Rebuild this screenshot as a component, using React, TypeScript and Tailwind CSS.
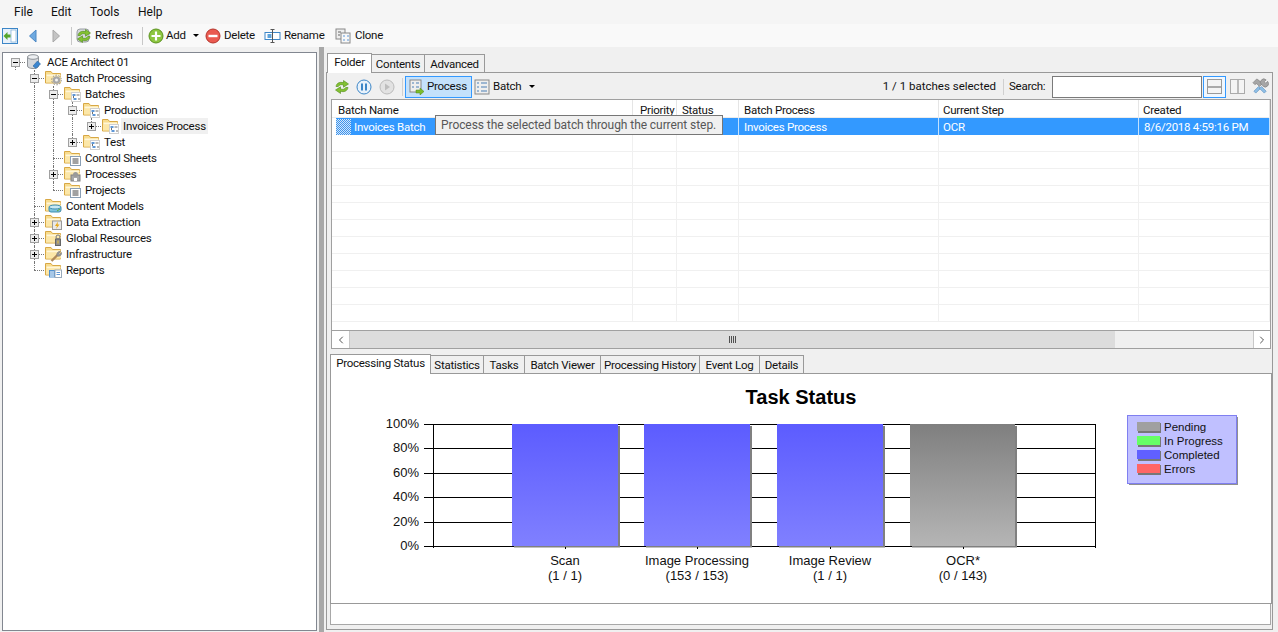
import React from 'react';
import { ChevronLeft, ChevronRight } from 'lucide-react';

type Overlay = 'gear' | 'flow' | 'lines' | 'machine' | 'db' | 'bolt' | 'lock' | 'wrench' | 'report';

const FolderIcon: React.FC<{ overlay: Overlay }> = ({ overlay }) => (
  <svg width="17" height="16" viewBox="0 0 17 16" className="shrink-0">
    <path d="M0.500 13V1.500h5.500l1.500 2h8v9.500z" fill="#f8dc8e" stroke="#d8a845" />
    <path d="M1.500 5.500h14" stroke="#fff6d8" strokeWidth="2" />
    <rect x="1" y="7" width="15" height="5.500" fill="#fce7a8" />
    {overlay === 'gear' && (
      <g>
        <circle cx="11.500" cy="10" r="3.800" fill="#a8a8a8" />
        <circle cx="11.500" cy="10" r="4.800" fill="none" stroke="#8a8a8a" strokeDasharray="1.5 1.5" />
        <circle cx="11.500" cy="10" r="1.500" fill="#f4f4f4" />
      </g>
    )}
    {overlay === 'flow' && (
      <g>
        <rect x="7.500" y="6.500" width="9" height="9" fill="#fff" stroke="#d0d0d0" />
        <rect x="8.500" y="8" width="3" height="2" fill="#5f97d6" />
        <rect x="9.500" y="12" width="3" height="2" fill="#5f97d6" />
        <path d="M12.500 9h3M14 13h2M9.500 10v2" stroke="#707070" />
      </g>
    )}
    {overlay === 'lines' && (
      <g>
        <rect x="6.500" y="6.500" width="10" height="9" fill="#fff" stroke="#8a9fb5" />
        <path d="M8.500 9h6M8.500 11h6M8.500 13h6" stroke="#444" />
      </g>
    )}
    {overlay === 'machine' && (
      <g>
        <rect x="7" y="9" width="9" height="6" fill="#a9a9a9" stroke="#808080" />
        <circle cx="11.500" cy="8.500" r="2.500" fill="#9a9a9a" />
        <rect x="10" y="12" width="3" height="3" fill="#fff" />
      </g>
    )}
    {overlay === 'db' && (
      <g>
        <rect x="4" y="8" width="12" height="6" rx="2" fill="#7fc3de" stroke="#3f8fb0" />
        <ellipse cx="10" cy="9" rx="6" ry="2" fill="#c7e8f4" stroke="#3f8fb0" />
        <path d="M12 13l3-2" stroke="#58a83a" />
      </g>
    )}
    {overlay === 'bolt' && (
      <g>
        <rect x="7.500" y="7" width="9" height="8.500" fill="#e8e8e8" stroke="#9a9a9a" />
        <path d="M13 7.500L10 12h2l-1 3 3.500-4.500h-2z" fill="#e8a817" />
      </g>
    )}
    {overlay === 'lock' && (
      <g>
        <rect x="10.500" y="9" width="5" height="6.500" fill="#8f8f8f" stroke="#666" />
        <circle cx="13" cy="7" r="2" fill="none" stroke="#777" />
        <rect x="12.500" y="10.500" width="1" height="3" fill="#f1c232" />
      </g>
    )}
    {overlay === 'wrench' && (
      <g>
        <path d="M6.500 15l6-6" stroke="#b08a5a" strokeWidth="2.400" />
        <path d="M12 9.500a3 3 0 0 1 3.500-4l-1.700 1.700 1 1 1.700-1.700a3 3 0 0 1-4 3.500z" fill="#9a9a9a" stroke="#777" strokeWidth="0.600" />
      </g>
    )}
    {overlay === 'report' && (
      <g>
        <rect x="4" y="8" width="6" height="7.500" fill="#4f90d0" />
        <path d="M5 10h4M5 12h4M5 14h4" stroke="#fff" />
        <rect x="10" y="8" width="6.500" height="7.500" fill="#fff" stroke="#9ab" />
        <path d="M11.500 10.500h3.500M11.500 12.500h3.500" stroke="#5f97d6" />
      </g>
    )}
  </svg>
);

const DbIcon = () => (
  <svg width="17" height="16" viewBox="0 0 17 16" className="shrink-0">
    <path d="M1.500 3v9c0 1.500 2.500 2.500 5.500 2.500s5.500-1 5.500-2.500V3z" fill="#d5d8dc" stroke="#8f9499" />
    <ellipse cx="7" cy="3" rx="5.500" ry="2.300" fill="#eef0f2" stroke="#8f9499" />
    <path d="M7 12l4.500-5 3 3-4.500 4.500z" fill="#3c86cf" stroke="#2a659f" strokeWidth="0.600" />
  </svg>
);

const TreeCell: React.FC<{ line?: 'full' | 'elbow' | 'tee' | 'start' | 'none'; exp?: '+' | '-' }> = ({ line = 'none', exp }) => (
  <div className="relative w-[19px] h-4 shrink-0">
    {(line === 'full' || line === 'tee') && <div className="absolute left-[9px] top-0 bottom-0 border-l border-dotted border-[#777]" />}
    {line === 'elbow' && <div className="absolute left-[9px] top-0 h-2 border-l border-dotted border-[#777]" />}
    {line === 'start' && <div className="absolute left-[9px] top-2 bottom-0 border-l border-dotted border-[#777]" />}
    {(line === 'tee' || line === 'elbow' || line === 'start') && (
      <div className="absolute left-[9px] right-0 top-2 border-t border-dotted border-[#777]" />
    )}
    {exp && (
      <div className="absolute left-[5px] top-[4px] w-[9px] h-[9px] border border-[#a0a0a0] bg-[#ececec] flex items-center justify-center">
        <div className="relative w-[5px] h-[5px]">
          <div className="absolute left-0 right-0 top-[2px] h-px bg-black" />
          {exp === '+' && <div className="absolute top-0 bottom-0 left-[2px] w-px bg-black" />}
        </div>
      </div>
    )}
  </div>
);

type TreeRowData = {
  label: string;
  guides: ('none' | 'full')[];
  line: 'elbow' | 'tee' | 'start';
  exp?: '+' | '-';
  overlay?: Overlay;
  selected?: boolean;
};

const treeRows: TreeRowData[] = [
  { label: 'ACE Architect 01', guides: [], line: 'start', exp: '-' },
  { label: 'Batch Processing', guides: ['none'], line: 'tee', exp: '-', overlay: 'gear' },
  { label: 'Batches', guides: ['none', 'full'], line: 'tee', exp: '-', overlay: 'flow' },
  { label: 'Production', guides: ['none', 'full', 'full'], line: 'tee', exp: '-', overlay: 'flow' },
  { label: 'Invoices Process', guides: ['none', 'full', 'full', 'full'], line: 'elbow', exp: '+', overlay: 'flow', selected: true },
  { label: 'Test', guides: ['none', 'full', 'full'], line: 'elbow', exp: '+', overlay: 'flow' },
  { label: 'Control Sheets', guides: ['none', 'full'], line: 'tee', overlay: 'lines' },
  { label: 'Processes', guides: ['none', 'full'], line: 'tee', exp: '+', overlay: 'machine' },
  { label: 'Projects', guides: ['none', 'full'], line: 'elbow', overlay: 'lines' },
  { label: 'Content Models', guides: ['none'], line: 'tee', overlay: 'db' },
  { label: 'Data Extraction', guides: ['none'], line: 'tee', exp: '+', overlay: 'bolt' },
  { label: 'Global Resources', guides: ['none'], line: 'tee', exp: '+', overlay: 'lock' },
  { label: 'Infrastructure', guides: ['none'], line: 'tee', exp: '+', overlay: 'wrench' },
  { label: 'Reports', guides: ['none'], line: 'elbow', overlay: 'report' },
];

const Caret = () => <span className="w-0 h-0 border-x-[3px] border-x-transparent border-t-[3px] border-t-black" />;

const arrowPaths = (
  <>
    <path d="M2 7.500C2.500 4 6 2.500 9.500 3.800V1.500l5 3.500-5 3.200V6C7 5.200 5 5.800 4.300 7.500z" fill="#84c232" stroke="#4d8a17" strokeWidth="0.600" />
    <path d="M14 8.500C13.500 12 10 13.500 6.500 12.200v2.300l-5-3.500 5-3.200V10c2.500.8 4.500.2 5.200-1.500z" fill="#84c232" stroke="#4d8a17" strokeWidth="0.600" />
  </>
);

const RefreshArrows = () => (
  <svg width="16" height="16" viewBox="0 0 16 16" className="shrink-0">
    {arrowPaths}
  </svg>
);

const TopToolbar = () => (
  <div className="h-[23px] bg-[#f9f9f9] flex items-center pl-[2px] shrink-0">
    <svg width="16" height="16" viewBox="0 0 16 16" className="shrink-0">
      <rect x="0.500" y="0.500" width="15" height="15" fill="#e8f1fa" stroke="#3c86c7" />
      <rect x="9" y="2" width="5" height="12" fill="#fff" stroke="#6aa0d0" strokeWidth="0.600" />
      <path d="M1.500 8l4-4v2.500h3v3h-3V12z" fill="#55a52a" />
    </svg>
    <svg width="10" height="14" viewBox="0 0 10 14" className="ml-[10px] shrink-0">
      <path d="M8 1L1.500 7 8 13z" fill="#6ea9e0" stroke="#4d88c4" />
    </svg>
    <svg width="10" height="14" viewBox="0 0 10 14" className="ml-[13px] shrink-0">
      <path d="M2 1l6.500 6L2 13z" fill="#c4c4c4" stroke="#a8a8a8" />
    </svg>
    <div className="w-px h-[18px] bg-[#c8c8c8] ml-[10px]" />
    <svg width="16" height="16" viewBox="0 0 16 16" className="ml-[4px] shrink-0">
      <rect x="1" y="1" width="12" height="13" rx="3" fill="#d5d8dc" stroke="#9a9fa4" />
      {arrowPaths}
    </svg>
    <span className="ml-[3px] w-[39px] whitespace-nowrap">Refresh</span>
    <div className="w-px h-[18px] bg-[#c8c8c8] ml-[8px]" />
    <svg width="16" height="16" viewBox="0 0 16 16" className="ml-[5px] shrink-0">
      <circle cx="8" cy="8" r="7" fill="#8dc63f" stroke="#5b921f" />
      <path d="M8 3.500v9M3.500 8h9" stroke="#fff" strokeWidth="2.200" />
    </svg>
    <span className="ml-[2px] w-[22px] whitespace-nowrap">Add</span>
    <span className="ml-[5px] flex"><Caret /></span>
    <svg width="16" height="16" viewBox="0 0 16 16" className="ml-[6px] shrink-0">
      <circle cx="8" cy="8" r="7" fill="#ea5a50" stroke="#b5342b" />
      <path d="M3.500 8h9" stroke="#fff" strokeWidth="2.400" />
    </svg>
    <span className="ml-[3px] w-[33px] whitespace-nowrap">Delete</span>
    <svg width="17" height="16" viewBox="0 0 16 16" className="ml-[7px] shrink-0">
      <rect x="0.500" y="4.500" width="15" height="7" fill="#fff" stroke="#3c86c7" />
      <rect x="3" y="6" width="4" height="4" fill="#5ea3db" />
      <path d="M8 1.500v13M6 1.500h4M6 14.500h4" stroke="#555" />
    </svg>
    <span className="ml-[3px] w-[43px] whitespace-nowrap">Rename</span>
    <svg width="16" height="16" viewBox="0 0 16 16" className="ml-[8px] shrink-0">
      <rect x="1" y="1" width="9" height="10" fill="#eee" stroke="#888" />
      <rect x="6" y="5" width="9" height="10" fill="#f7f7f7" stroke="#888" />
      <path d="M8 8h2M12 8h2M8 12h2M12 12h2" stroke="#5f97d6" />
      <path d="M3 4h3M3 7h2" stroke="#666" />
    </svg>
    <span className="ml-[4px]">Clone</span>
  </div>
);

const columns = [
  { name: 'Batch Name', w: 'w-[301px]', head: 'pl-[6px]', body: '', cell: 'Invoices Batch' },
  { name: 'Priority', w: 'w-[44px]', head: 'pl-[7px]', body: '', cell: '' },
  { name: 'Status', w: 'w-[62px]', head: 'pl-[5px]', body: '', cell: '' },
  { name: 'Batch Process', w: 'w-[200px]', head: 'pl-[5px]', body: 'pl-[5px]', cell: 'Invoices Process' },
  { name: 'Current Step', w: 'w-[200px]', head: 'pl-[4px]', body: 'pl-[4px]', cell: 'OCR' },
  { name: 'Created', w: 'w-[131px]', head: 'pl-[4px]', body: 'pl-[5px]', cell: '8/6/2018 4:59:16 PM' },
];

const BatchList = () => (
  <div className="relative h-[250px] ml-[4px] w-[940px] border border-[#a0a0a0] bg-white flex flex-col overflow-hidden shrink-0">
    <div className="flex h-[18px] shrink-0 border-b border-[#ececec]">
      {columns.map((c) => (
        <div key={c.name} className={`${c.w} ${c.head} shrink-0 pt-[3px] leading-[14px] border-r border-[#e5e5e5] overflow-hidden whitespace-nowrap`}>
          {c.name}
        </div>
      ))}
    </div>
    <div className="flex h-[17px] shrink-0">
      <div className="w-[4px] shrink-0" />
      {columns.map((c, i) => (
        <div key={c.name} className={`${i === 0 ? 'w-[297px] gap-[3px]' : c.w} ${c.body} shrink-0 bg-[#3399ff] text-white leading-[17px] border-r border-white/70 flex items-center whitespace-nowrap overflow-hidden`}>
          {i === 0 && (
            <svg width="15" height="16" viewBox="0 0 15 16" className="shrink-0" shapeRendering="crispEdges">
              <defs>
                <pattern id="dither" width="2" height="2" patternUnits="userSpaceOnUse">
                  <rect width="2" height="2" fill="#3f93ea" />
                  <rect width="1" height="1" fill="#cfe6fd" />
                  <rect x="1" y="1" width="1" height="1" fill="#cfe6fd" />
                </pattern>
              </defs>
              <rect width="15" height="16" fill="url(#dither)" />
            </svg>
          )}
          <span className="pt-px">{c.cell}</span>
        </div>
      ))}
    </div>
    <div className="flex-1 flex flex-col">
      {Array.from({ length: 11 }).map((_, r) => (
        <div key={r} className="flex h-[17px] shrink-0 border-b border-[#f0f0f0]">
          {columns.map((c) => (
            <div key={c.name} className={`${c.w} shrink-0 border-r border-[#f0f0f0]`} />
          ))}
        </div>
      ))}
    </div>
    <div className="absolute left-0 right-0 bottom-0 h-[18px] flex bg-[#f0f0f0] border-t border-[#a0a0a0]">
      <div className="w-[18px] bg-white border-r border-[#c8c8c8] flex items-center justify-center">
        <ChevronLeft className="w-3 h-3 text-[#555]" />
      </div>
      <div className="w-[765px] bg-[#dcdcdc] flex items-center justify-center">
        <span className="flex gap-px">
          <span className="w-px h-[7px] bg-[#505050]" />
          <span className="w-px h-[7px] bg-[#505050]" />
          <span className="w-px h-[7px] bg-[#505050]" />
          <span className="w-px h-[7px] bg-[#505050]" />
        </span>
      </div>
      <div className="flex-1" />
      <div className="w-[17px] bg-white border-l border-[#c8c8c8] flex items-center justify-center">
        <ChevronRight className="w-3 h-3 text-[#555]" />
      </div>
    </div>
  </div>
);

const Tab: React.FC<{ label: string; w: string; active?: boolean }> = ({ label, w, active }) =>
  active ? (
    <div className={`${w} h-5 -mb-px relative z-10 bg-white border border-b-0 border-[#999] shrink-0 text-center leading-[17px] whitespace-nowrap`}>{label}</div>
  ) : (
    <div className={`${w} h-[18px] bg-[#f0f0f0] border border-b-0 border-l-0 border-[#999] shrink-0 text-center leading-[19px] whitespace-nowrap`}>{label}</div>
  );

const bars = [
  { x: 512, w: 107, label: 'Scan', count: '(1 / 1)', id: 'barBlue' },
  { x: 644, w: 107, label: 'Image Processing', count: '(153 / 153)', id: 'barBlue' },
  { x: 777, w: 107, label: 'Image Review', count: '(1 / 1)', id: 'barBlue' },
  { x: 910, w: 106, label: 'OCR*', count: '(0 / 143)', id: 'barGray' },
];

const TaskChart = () => (
  <svg width="940" height="229" viewBox="331 374 940 229" className="block" style={{ fontFamily: '"Liberation Sans", sans-serif', letterSpacing: 0 }}>
    <defs>
      <linearGradient id="barBlue" x1="0" x2="0" y1="0" y2="1">
        <stop offset="0" stopColor="#5c5cff" />
        <stop offset="1" stopColor="#8080ff" />
      </linearGradient>
      <linearGradient id="barGray" x1="0" x2="0" y1="0" y2="1">
        <stop offset="0" stopColor="#7f7f7f" />
        <stop offset="1" stopColor="#b5b5b5" />
      </linearGradient>
    </defs>
    <text x="801" y="404" textAnchor="middle" fontSize="20" fontWeight="700" fill="#000">Task Status</text>
    {[100, 80, 60, 40, 20, 0].map((p, i) => {
      const y = 424 + i * 24.4;
      return (
        <g key={p}>
          <path d={`M424 ${Math.round(y) + 0.5}H1095`} stroke="#000" />
          <text x="419" y={Math.round(y) + 4} textAnchor="end" fontSize="13" fill="#111">{p}%</text>
        </g>
      );
    })}
    <path d="M433.500 424V548M1095.500 424V548" stroke="#000" />
    {bars.map((b) => (
      <g key={b.label}>
        <rect x={b.x + 2} y="426" width={b.w - 1} height="121.500" fill="#808080" />
        <rect x={b.x} y="424" width={b.w - 1} height="122" fill={`url(#${b.id})`} />
        <path d={`M${b.x + 53.5} 547V549`} stroke="#000" />
        <text x={b.x + 53} y="565" textAnchor="middle" fontSize="13" fill="#111">{b.label}</text>
        <text x={b.x + 53} y="580" textAnchor="middle" fontSize="13" fill="#111">{b.count}</text>
      </g>
    ))}
    <rect x="1129" y="417" width="109" height="68" fill="#909090" />
    <rect x="1127.500" y="415.500" width="109" height="68" fill="#c0c0ff" stroke="#7f7ff0" />
    {[
      { label: 'Pending', fill: '#a0a0a0' },
      { label: 'In Progress', fill: '#66ff66' },
      { label: 'Completed', fill: '#6060ff' },
      { label: 'Errors', fill: '#ff6666' },
    ].map((l, i) => (
      <g key={l.label}>
        <rect x="1138" y={423 + i * 14} width="23" height="10" fill="#777" />
        <rect x="1137" y={422 + i * 14} width="23" height="9" fill={l.fill} />
        <text x="1164" y={431 + i * 14} fontSize="11.500" fill="#111">{l.label}</text>
      </g>
    ))}
  </svg>
);

export default function App() {
  return (
    <div
      className="w-[1278px] h-[632px] overflow-hidden bg-[#f0f0f0] flex flex-col text-[11.5px] tracking-[-0.25px] text-[#111]"
      style={{ fontFamily: 'Roboto, "Liberation Sans", Arial, sans-serif' }}
    >
      <div className="h-6 shrink-0 bg-[#f5f5f5] flex items-center pl-[14px] gap-[19px] text-[12px] tracking-normal">
        <span className="w-[18px]">File</span>
        <span className="w-[20px]">Edit</span>
        <span className="w-[29px]">Tools</span>
        <span>Help</span>
      </div>
      <TopToolbar />

      <div className="flex-1 flex min-h-0">
        <div className="w-[315px] ml-[2px] mt-[5px] mb-[1px] bg-white border border-[#828790] pl-[3px] pt-[1px] shrink-0">
          {treeRows.map((r) => (
            <div key={r.label} className="flex h-4 items-center">
              {r.guides.map((g, i) => (
                <TreeCell key={i} line={g} />
              ))}
              <TreeCell line={r.line} exp={r.exp} />
              <span className="ml-px">{r.overlay ? <FolderIcon overlay={r.overlay} /> : <DbIcon />}</span>
              <span className={`ml-[2px] px-[2px] h-4 leading-4 whitespace-nowrap ${r.selected ? 'bg-[#f0f0f0]' : ''}`}>{r.label}</span>
            </div>
          ))}
        </div>

        <div className="w-[5px] ml-[2px] bg-[#a8a8a8] shrink-0" />

        <div className="flex-1 min-w-0 flex flex-col pl-[2px] pr-[5px] pt-[5px] pb-[2px] relative">
          <div className="flex items-end h-[20px] pl-px shrink-0">
            <Tab label="Folder" w="w-[45px]" active />
            <Tab label="Contents" w="w-[53px]" />
            <Tab label="Advanced" w="w-[60px]" />
          </div>
          <div className="flex-1 border border-[#999] flex flex-col min-h-0 w-[947px]">
            <div className="h-[26px] flex items-center pl-[7px] pr-[3px] shrink-0 pt-px">
              <RefreshArrows />
              <svg width="16" height="16" viewBox="0 0 16 16" className="ml-[6px] shrink-0">
                <circle cx="8" cy="8" r="7" fill="#e8f2fb" stroke="#3c86c7" />
                <path d="M6 4.500v7M10 4.500v7" stroke="#3c86c7" strokeWidth="2" />
              </svg>
              <svg width="16" height="16" viewBox="0 0 16 16" className="ml-[7px] shrink-0">
                <circle cx="8" cy="8" r="7" fill="#e2e2e2" stroke="#bbb" />
                <path d="M6 4.500L11 8l-5 3.500z" fill="#bdbdbd" />
              </svg>
              <div className="w-px h-[18px] bg-[#d0d0d0] ml-[7px]" />
              <div className="ml-[2px] h-[22px] w-[67px] bg-[#c4e1fb] border border-[#3399ff] flex items-center pl-[3px] gap-[2px] shrink-0">
                <svg width="16" height="16" viewBox="0 0 16 16" className="shrink-0">
                  <rect x="1" y="1" width="11" height="12" fill="#eee" stroke="#888" />
                  <path d="M3 4h2M3 8h2M7 4h3M7 8h3" stroke="#4a7fb5" />
                  <path d="M7 11h4V9l4 3.500-4 3.500v-2H7z" fill="#7cbc2c" stroke="#4d8a17" strokeWidth="0.500" />
                </svg>
                <span>Process</span>
              </div>
              <svg width="16" height="16" viewBox="0 0 16 16" className="ml-[2px] shrink-0">
                <rect x="1" y="1" width="14" height="14" fill="#eee" stroke="#888" />
                <path d="M3 4h2M3 8h2M3 12h2M7 4h6M7 8h6M7 12h6" stroke="#4a7fb5" />
              </svg>
              <span className="ml-[3px] w-[30px]">Batch</span>
              <span className="ml-[6px] flex"><Caret /></span>
              <div className="flex-1" />
              <span className="tracking-normal">1 / 1 batches selected</span>
              <div className="w-px h-[16px] bg-[#d0d0d0] ml-[7px]" />
              <span className="ml-[5px] w-[38px]">Search:</span>
              <div className="ml-[5px] w-[150px] h-[22px] bg-white border border-[#7a7a7a]" />
              <div className="ml-px w-[23px] h-[22px] bg-[#f0f7fe] border border-[#3399ff] flex items-center justify-center">
                <span className="w-[15px] h-[15px] border border-[#999] bg-[#f4f4f4] flex flex-col justify-center">
                  <span className="h-[2px] bg-[#aaa]" />
                </span>
              </div>
              <div className="ml-[4px] w-[15px] h-[15px] border border-[#aaa] bg-[#f4f4f4] flex justify-center">
                <span className="w-[2px] bg-[#bbb]" />
              </div>
              <svg width="17" height="17" viewBox="0 0 18 18" className="ml-[7px] shrink-0">
                <path d="M7 9L2 14l2 2 5-5z" fill="#8fbfe6" stroke="#4f86b8" strokeWidth="0.600" />
                <path d="M10 9l5 5-2 2-5-5z" fill="#8fbfe6" stroke="#4f86b8" strokeWidth="0.600" />
                <path d="M1 5l4-4 3 2 3 3-3 3-3-3-2 1z" fill="#a6a6a6" stroke="#777" strokeWidth="0.600" />
                <path d="M10 7a3.500 3.500 0 0 1 5-5l-2 2 1.500 1.500 2-2a3.500 3.500 0 0 1-5 5z" fill="#a6a6a6" stroke="#777" strokeWidth="0.600" />
              </svg>
            </div>

            <BatchList />

            <div className="flex items-end h-[20px] mt-[4px] ml-[3px] shrink-0">
              <Tab label="Processing Status" w="w-[101px]" active />
              <Tab label="Statistics" w="w-[53px]" />
              <Tab label="Tasks" w="w-[41px]" />
              <Tab label="Batch Viewer" w="w-[76px]" />
              <Tab label="Processing History" w="w-[99px]" />
              <Tab label="Event Log" w="w-[60px]" />
              <Tab label="Details" w="w-[44px]" />
            </div>
            <div className="h-[231px] ml-[3px] bg-white border border-[#999] shrink-0">
              <TaskChart />
            </div>
            <div className="h-[21px] ml-[3px] mr-[1px] bg-white border border-t-0 border-[#a8a8a8] shrink-0" />
          </div>
          <div className="absolute left-[111px] top-[68px] w-[288px] h-5 bg-[#f0f0f0] border border-[#767676] text-[#575757] pl-[5px] text-[12px] tracking-[-0.07px] leading-[18px] whitespace-nowrap z-20">
            Process the selected batch through the current step.
          </div>
        </div>
      </div>
    </div>
  );
}
